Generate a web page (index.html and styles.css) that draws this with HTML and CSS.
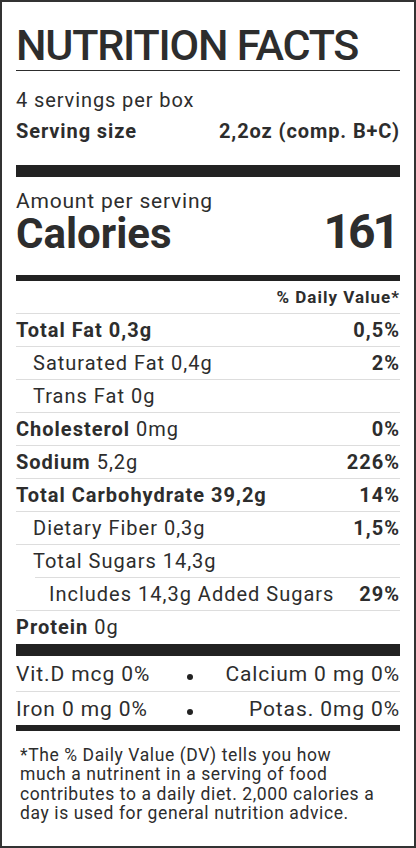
FILE: index.html
```html
<!DOCTYPE html>
<html lang="en">
<head>
    <meta charset="UTF-8">
    <meta name="viewport" content="width=device-width, initial-scale=1.0">
    <title>Nutrition Facts</title>
    <link rel="stylesheet" href="styles.css">
</head>
<body>

<div class="label">
    <h1 class="title">NUTRITION FACTS</h1>

    <div class="servings">
        <div class="servings-count">4 servings per box</div>
        <div class="serving-size">
            <span>Serving size</span>
            <span>2,2oz (comp. B+C)</span>
        </div>
    </div>

    <div class="bar bar-thick"></div>

    <div class="calories">
        <div class="amount">Amount per serving</div>
        <div class="calories-line">
            <span class="calories-label">Calories</span>
            <span class="calories-value">161</span>
        </div>
    </div>

    <div class="bar bar-medium"></div>

    <div class="dv-head">% Daily Value*</div>

    <div class="row">
        <span><b>Total Fat 0,3g</b></span>
        <b>0,5%</b>
    </div>
    <div class="row indent">
        <span>Saturated Fat 0,4g</span>
        <b>2%</b>
    </div>
    <div class="row indent">
        <span>Trans Fat 0g</span>
    </div>
    <div class="row">
        <span><b>Cholesterol</b> 0mg</span>
        <b>0%</b>
    </div>
    <div class="row">
        <span><b>Sodium</b> 5,2g</span>
        <b>226%</b>
    </div>
    <div class="row">
        <span><b>Total Carbohydrate 39,2g</b></span>
        <b>14%</b>
    </div>
    <div class="row indent">
        <span>Dietary Fiber 0,3g</span>
        <b>1,5%</b>
    </div>
    <div class="row indent short-line">
        <span>Total Sugars 14,3g</span>
    </div>
    <div class="row indent-2">
        <span>Includes 14,3g Added Sugars</span>
        <b>29%</b>
    </div>
    <div class="row last">
        <span><b>Protein</b> 0g</span>
    </div>

    <div class="bar bar-thick"></div>

    <div class="vit-row">
        <span>Vit.D mcg 0%</span>
        <span class="dot"></span>
        <span class="right">Calcium 0 mg 0%</span>
    </div>
    <div class="vit-row last">
        <span>Iron 0 mg 0%</span>
        <span class="dot"></span>
        <span class="right">Potas. 0mg 0%</span>
    </div>

    <div class="bar bar-medium"></div>

    <p class="footnote">*The % Daily Value (DV) tells you how much a nutrinent in a serving of food contributes to a daily diet. 2,000 calories a day is used for general nutrition advice.</p>
</div>

</body>
</html>
```

FILE: styles.css
```css
body {
    margin: 0;
    padding: 0;
    background-color: #fff;
    font-family: Roboto, "Liberation Sans", sans-serif;
    color: #2d2d2d;
}
.label {
    width: 416px;
    height: 848px;
    box-sizing: border-box;
    border: 2px solid #333;
    padding: 0 14px;
}
.title {
    margin: 0;
    height: 69px;
    padding-top: 17px;
    box-sizing: border-box;
    font-size: 43px;
    font-weight: 500;
    letter-spacing: -1.2px;
    line-height: 52px;
    white-space: nowrap;
    border-bottom: 1px solid #2d2d2d;
}
.servings {
    padding-top: 16px;
    height: 94px;
    box-sizing: border-box;
    letter-spacing: 0.9px;
}
.servings-count {
    font-size: 20px;
    line-height: 26px;
}
.serving-size {
    display: flex;
    justify-content: space-between;
    font-size: 20px;
    font-weight: 700;
    line-height: 26px;
    margin-top: 5px;
}
.bar {
    background-color: #222;
}
.bar-thick {
    height: 12px;
}
.bar-medium {
    height: 6px;
}
.calories {
    height: 98px;
    padding-top: 14px;
    box-sizing: border-box;
}
.amount {
    font-size: 21px;
    line-height: 20px;
    letter-spacing: 0.8px;
}
.calories-line {
    display: flex;
    justify-content: space-between;
    align-items: baseline;
    line-height: 40px;
    margin-top: 1px;
}
.calories-label {
    font-size: 42px;
    font-weight: 700;
}
.calories-value {
    font-size: 48px;
    font-weight: 700;
    letter-spacing: -3px;
    margin-right: 3px;
}
.dv-head {
    height: 33px;
    box-sizing: border-box;
    border-bottom: 1px solid #ddd;
    text-align: right;
    font-size: 17px;
    font-weight: 700;
    letter-spacing: 1px;
    line-height: 32px;
}
.row {
    display: flex;
    justify-content: space-between;
    height: 33px;
    box-sizing: border-box;
    border-bottom: 1px solid #ddd;
    font-size: 20px;
    letter-spacing: 1px;
    line-height: 32px;
}
.row b {
    font-weight: 700;
}
.row.indent {
    padding-left: 17px;
}
.row.indent-2 {
    padding-left: 33px;
}
.row.short-line {
    border-bottom: none;
    background: linear-gradient(#ddd, #ddd) 19px 100% / calc(100% - 19px) 1px no-repeat;
}
.row.last,
.vit-row.last {
    border-bottom: none;
}
.vit-row {
    display: grid;
    grid-template-columns: 168px 12px 1fr;
    align-items: center;
    height: 36px;
    box-sizing: border-box;
    border-bottom: 1px solid #ddd;
    font-size: 21px;
    letter-spacing: 0.9px;
}
.vit-row.last {
    height: 33px;
}
.vit-row .right {
    text-align: right;
}
.dot {
    width: 6px;
    height: 6px;
    margin: 6px auto 0;
    border-radius: 50%;
    background-color: #222;
}
.footnote {
    margin: 0;
    padding: 15px 20px 0 4px;
    font-size: 17.5px;
    letter-spacing: 0.6px;
    line-height: 19.4px;
}
```
